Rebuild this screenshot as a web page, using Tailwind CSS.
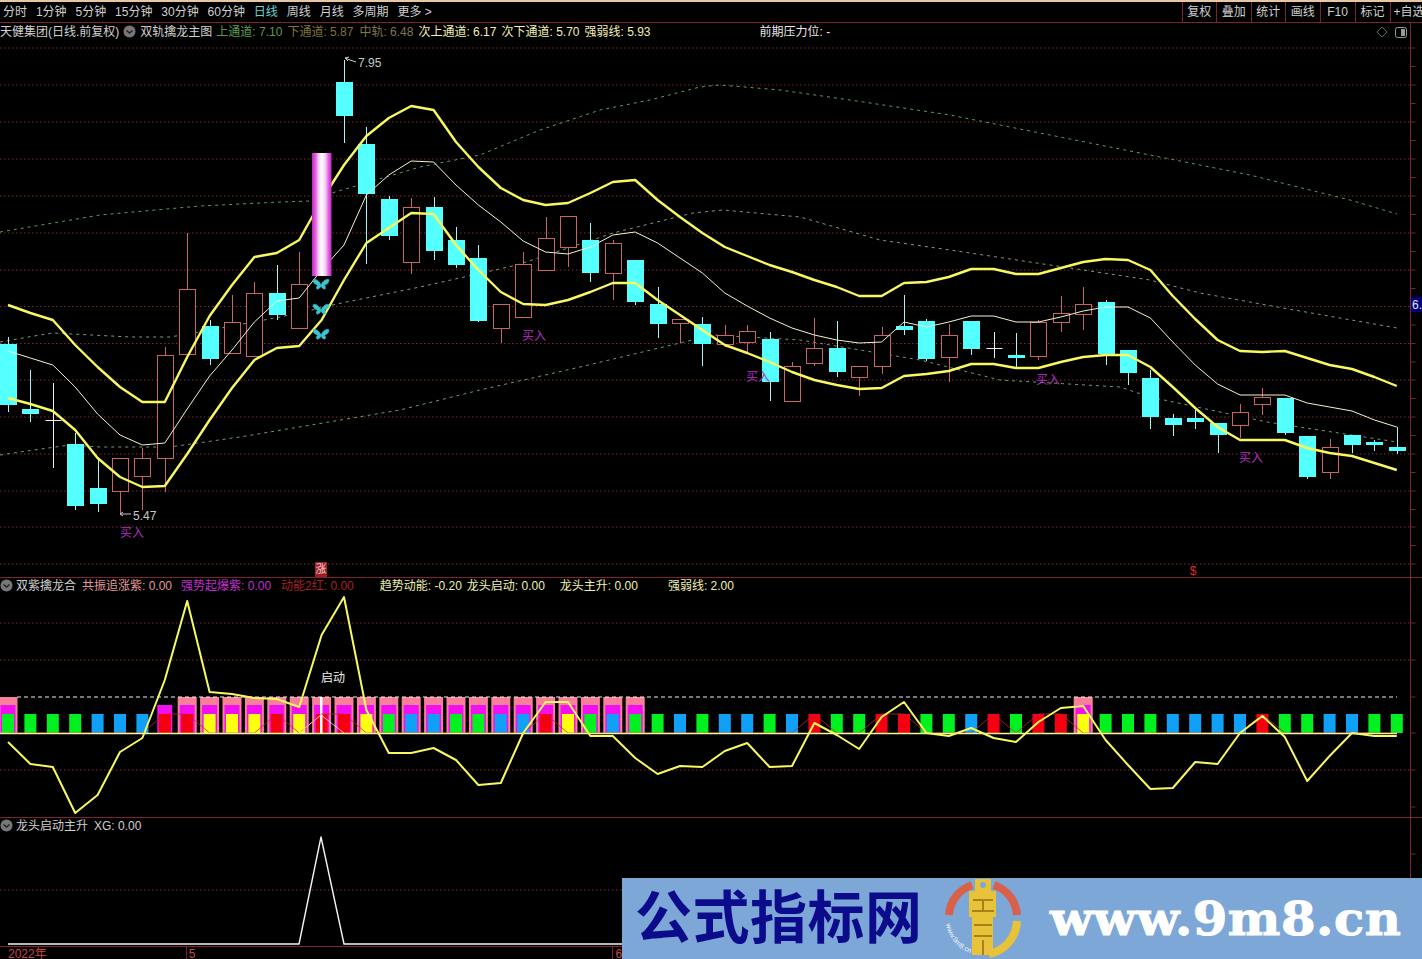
<!DOCTYPE html>
<html lang="en">
<head>
    <meta charset="utf-8">
    <meta name="viewport" content="width=device-width, initial-scale=1.0">
    <title>天健集团 日线</title>
    <script src="https://cdn.jsdelivr.net/npm/@tailwindcss/browser@4"></script>
</head>
<body class="relative bg-black h-screen overflow-hidden text-[12px] leading-none text-[#d0d0d0] font-['Liberation_Sans','Noto_Sans_CJK_SC',sans-serif]">

    <!-- period tabs + tools -->
    <header class="h-[23px] flex border-t-2 border-t-[#e8c8a0] border-b border-b-[#7c2230] overflow-hidden">
        <nav class="flex items-center gap-[8.9px] pl-[3px]">
            <span>分时</span><span>1分钟</span><span>5分钟</span><span>15分钟</span><span>30分钟</span><span>60分钟</span>
            <span class="text-[#6fd0d0]">日线</span><span>周线</span><span>月线</span><span>多周期</span><span>更多 &gt;</span>
        </nav>
        <div class="ml-auto flex shrink-0 w-[240.5px]">
            <span class="w-[34.5px] shrink-0 flex items-center justify-center border-l border-[#7c2230]">复权</span>
            <span class="w-[34.5px] shrink-0 flex items-center justify-center border-l border-[#7c2230]">叠加</span>
            <span class="w-[34.5px] shrink-0 flex items-center justify-center border-l border-[#7c2230]">统计</span>
            <span class="w-[34.5px] shrink-0 flex items-center justify-center border-l border-[#7c2230]">画线</span>
            <span class="w-[35px] shrink-0 flex items-center justify-center border-l border-[#7c2230]">F10</span>
            <span class="w-[35px] shrink-0 flex items-center justify-center border-l border-[#7c2230]">标记</span>
            <span class="w-[40px] shrink-0 pl-[3px] flex items-center border-l border-[#7c2230] whitespace-nowrap">+自选</span>
        </div>
    </header>

    <!-- main chart -->
    <section class="relative h-[555px] border-b border-[#7c2230]">
        <svg id="mainChart" class="block" width="1422" height="554" viewBox="0 23 1422 554"></svg>
        <div class="absolute top-[1px] left-0 h-[15px] flex items-center whitespace-nowrap">
            <span>天健集团(日线.前复权)</span>
            <svg class="ml-[4px]" width="13" height="13" viewBox="0 0 13 13"><circle cx="6.5" cy="6.5" r="6" fill="#777"/><path d="M3.5 5.5l3 2.6 3-2.6" fill="none" stroke="#222" stroke-width="1.5"/></svg>
            <span class="ml-[4px]">双轨擒龙主图</span>
            <span class="ml-[4px] text-[#5c9c50]">上通道: 7.10</span>
            <span class="ml-[5px] text-[#7c7638]">下通道: 5.87</span>
            <span class="ml-[6px] text-[#7c7a50]">中轨: 6.48</span>
            <span class="ml-[5px] text-[#f0f0b4]">次上通道: 6.17</span>
            <span class="ml-[5px] text-[#f0f0b4]">次下通道: 5.70</span>
            <span class="ml-[5px] text-[#f0f0b4]">强弱线: 5.93</span>
            <span class="ml-[109px] text-[#e8e8e8]">前期压力位: -</span>
        </div>
    </section>

    <!-- indicator 1 -->
    <section class="relative h-[240px] border-b border-[#7c2230]">
        <svg id="indChart" class="block" width="1422" height="239" viewBox="0 578 1422 239"></svg>
        <div class="absolute top-0 left-0 h-[15px] flex items-center whitespace-nowrap">
            <svg width="13" height="13" viewBox="0 0 13 13"><circle cx="6.5" cy="6.5" r="6" fill="#777"/><path d="M3.5 5.5l3 2.6 3-2.6" fill="none" stroke="#222" stroke-width="1.5"/></svg>
            <span class="ml-[3px]">双紫擒龙合</span>
            <span class="ml-[6px] text-[#e09a9a]">共振追涨紫: 0.00</span>
            <span class="ml-[9px] text-[#c030d0]">强势起爆紫: 0.00</span>
            <span class="ml-[10px] text-[#a82222]">动能2红: 0.00</span>
            <span class="ml-[26px] text-[#f0f0b4]">趋势动能: -0.20</span>
            <span class="ml-[5px] text-[#f0f0b4]">龙头启动: 0.00</span>
            <span class="ml-[15px] text-[#f0f0b4]">龙头主升: 0.00</span>
            <span class="ml-[30px] text-[#f0f0b4]">强弱线: 2.00</span>
        </div>
    </section>

    <!-- indicator 2 -->
    <section class="relative h-[129px] border-b border-[#7c2230]">
        <svg id="xgChart" class="block" width="1422" height="128" viewBox="0 818 1422 128"></svg>
        <div class="absolute top-0 left-0 h-[15px] flex items-center whitespace-nowrap">
            <svg width="13" height="13" viewBox="0 0 13 13"><circle cx="6.5" cy="6.5" r="6" fill="#777"/><path d="M3.5 5.5l3 2.6 3-2.6" fill="none" stroke="#222" stroke-width="1.5"/></svg>
            <span class="ml-[3px]">龙头启动主升</span>
            <span class="ml-[6px]">XG: 0.00</span>
        </div>
    </section>

    <!-- date axis -->
    <footer class="h-[12px] flex items-start text-[#c84848] overflow-hidden">
        <span class="ml-[8px] pt-[1px]">2022年</span>
        <span class="ml-[139px] pl-[2px] pt-[1px] border-l border-[#7c2230]">5</span>
        <span class="ml-[417px] pl-[2px] pt-[1px] border-l border-[#7c2230]">6</span>
    </footer>

    <!-- site banner over the chart corner -->
    <div class="absolute left-[622px] top-[878px] w-[800px] h-[81px] bg-[#7da7d6] flex items-center">
        <span class="ml-[13px] w-[285px] text-[57px] leading-none font-bold tracking-[0.5px] text-[#0b0b8c] whitespace-nowrap">公式指标网</span>
        <svg class="ml-[23px] shrink-0" width="80" height="81" viewBox="0 0 80 81">
            <path d="M6 37A34 34 0 0 1 29 7" fill="none" stroke="#d8614c" stroke-width="8"/>
            <path d="M51 7A34 34 0 0 1 74 37" fill="none" stroke="#d8614c" stroke-width="8"/>
            <path d="M74 43A35 35 0 0 1 46 76" fill="none" stroke="#e8c238" stroke-width="8"/>
            <path d="M32 1h16v12h5v26h-3v38h-21v-38h-3v-26h6z" fill="#e8c238"/>
            <circle cx="40" cy="7" r="3" fill="#7da7d6"/>
            <path d="M30 22h20M29 33h22M31 47h18M31 58h18M40 22v11M40 62v15" stroke="#a8801c" stroke-width="2" fill="none"/>
            <path id="logoArc" d="M3 46A37 37 0 0 0 27 75" fill="none"/>
            <text class="text-[7px]" fill="#f4f4f4"><textPath href="#logoArc">www.9m8.cn</textPath></text>
        </svg>
        <span class="ml-[27px] origin-left scale-x-[1.08] text-[46px] leading-none font-bold tracking-[0.5px] text-white whitespace-nowrap [-webkit-text-stroke:1px_white] font-['DejaVu_Serif',serif]">www.9m8.cn</span>
    </div>

    <script>
        const NS = 'http://www.w3.org/2000/svg';
        const X = i => 8 + 22.4 * i;
        const AXIS = 1410.5;
        const GRID = '#7e2a2a';

        // [bodyTop, bodyBottom, wickTop, wickBottom, type]  d = down (cyan), u = up (hollow), x = doji, b = limit-up bar
        const candles = [
            [344,405,337,412,'d'],[409,414,370,422,'d'],[420,420,383,468,'x'],[444,506,433,510,'d'],[488,504,459,512,'d'],
            [458,491,458,513,'u'],[458,476,448,510,'u'],[355,458,347,492,'u'],[289,354,233,354,'u'],[326,359,320,365,'d'],
            [322,353,295,353,'u'],[293,356,282,356,'u'],[293,315,265,320,'d'],[284,328,252,328,'u'],[153,276,153,276,'b'],
            [82,116,60,143,'d'],[144,194,127,264,'d'],[199,236,196,240,'d'],[207,262,198,274,'u'],[207,251,197,260,'d'],
            [240,265,227,268,'d'],[258,321,245,322,'d'],[304,328,304,343,'u'],[264,317,252,317,'u'],[238,270,217,270,'u'],
            [216,247,216,267,'u'],[240,273,223,282,'d'],[243,273,240,300,'u'],[260,302,260,305,'d'],[304,324,287,338,'d'],
            [319,323,319,343,'u'],[324,344,317,366,'d'],[335,344,325,347,'u'],[331,342,325,353,'u'],[339,382,332,401,'d'],
            [366,401,362,401,'u'],[348,363,318,366,'u'],[348,372,321,377,'d'],[366,377,366,396,'u'],[335,366,327,374,'u'],
            [326,330,295,335,'d'],[321,359,319,361,'d'],[335,357,324,382,'u'],[321,349,321,355,'d'],[348,348,332,358,'x'],
            [355,357,333,368,'d'],[322,356,320,360,'u'],[313,322,296,332,'u'],[304,314,287,330,'u'],[302,354,300,365,'d'],
            [350,373,350,385,'d'],[378,417,370,429,'d'],[418,425,414,436,'d'],[418,422,410,429,'d'],[423,435,423,453,'d'],
            [412,425,404,438,'u'],[397,404,388,415,'u'],[398,433,398,435,'d'],[436,477,436,479,'d'],[447,472,439,479,'u'],
            [435,445,435,453,'d'],[442,445,440,451,'d'],[447,451,427,454,'d']
        ];

        const upper = [305,313,320,345,367,387,402,402,357,316,285,257,253,240,200,165,136,118,106,110,142,167,188,200,205,203,193,182,180,200,217,233,247,256,265,272,280,287,296,296,283,282,277,269,269,274,274,268,262,259,260,270,296,319,340,351,352,351,358,365,369,377,386];
        const middle = [351,358,365,387,414,435,445,443,409,376,350,322,301,298,270,245,195,175,161,162,185,205,222,241,252,254,247,235,232,243,258,273,293,306,318,328,335,340,343,342,322,327,322,316,316,322,322,317,311,307,307,318,342,365,384,395,395,395,403,407,411,420,427];
        const lower = [398,404,411,430,458,477,487,486,454,420,388,360,348,346,320,280,243,228,213,214,245,270,292,304,305,300,292,283,283,300,315,330,345,353,362,372,380,385,389,388,376,374,371,364,364,368,368,362,357,355,355,367,387,408,427,440,440,440,448,453,456,463,470];

        const outerTop = [[0,232],[100,215],[200,206],[280,202],[310,201],[332,193],[420,167],[480,155],[540,130],[600,110],[650,100],[700,87],[720,85],[780,90],[850,100],[950,115],[1050,135],[1150,155],[1250,175],[1350,200],[1397,214]];
        const outerMid = [[0,342],[40,335],[53,333],[130,337],[170,337],[200,332],[280,317],[312,310],[332,305],[420,287],[517,265],[613,233],[693,213],[723,210],[800,217],[880,240],[950,250],[1050,265],[1150,280],[1200,293],[1283,308],[1397,328]];
        const outerLow = [[0,455],[20,452],[70,445],[100,447],[170,447],[240,437],[400,410],[480,390],[580,367],[680,343],[713,335],[800,340],[920,360],[1000,380],[1120,387],[1150,397],[1267,422],[1397,442]];

        const buy = [[132,533],[534,336],[758,377],[1048,380],[1251,458]];

        // g = green, b = blue, r = red, y = yellow
        const bars = ['g','g','g','g','b','b','b','r','r','y','y','y','r','y','r','r','y','g','b','b','g','g','b','b','r','y','g','b','g','g','b','g','b','b','g','b','r','g','g','r','r','g','g','b','r','g','r','r','y','g','g','g','b','b','b','b','r','g','g','b','b','g','g'];
        const BAR = { g: '#00f020', b: '#10a0f8', r: '#f40010', y: '#ffff10' };
        const pink = i => i === 0 || (i >= 8 && i <= 28) || i === 48;
        const trend = [742,764,767,813,795,752,738,680,601,692,694,698,699,707,635,597,710,753,753,748,760,785,783,733,702,702,736,736,758,774,766,767,751,743,767,766,723,735,749,717,702,733,736,728,738,742,722,708,706,740,765,789,788,762,764,733,716,737,781,756,733,736,736];

        const el = (tag, attrs, text) => {
            const n = document.createElementNS(NS, tag);
            for (const k in attrs) n.setAttribute(k, attrs[k]);
            if (text) n.textContent = text;
            return n;
        };
        const series = arr => arr.map((y, i) => X(i) + ',' + y).join(' ');
        const pairs = arr => arr.map(p => p.join(',')).join(' ');
        const line = (svg, points, color, width, dash) => svg.appendChild(el('polyline', {
            points, fill: 'none', stroke: color, 'stroke-width': width, 'stroke-dasharray': dash || 'none', 'stroke-linejoin': 'round'
        }));
        const grid = (svg, y) => svg.appendChild(el('line', { x1: 0, x2: AXIS, y1: y, y2: y, stroke: GRID, 'stroke-dasharray': '1.5 2.5' }));
        const axis = (svg, y1, y2, ticks) => {
            svg.appendChild(el('line', { x1: AXIS, x2: AXIS, y1, y2, stroke: '#7c2230' }));
            ticks.forEach(y => svg.appendChild(el('line', { x1: AXIS, x2: AXIS + 5, y1: y, y2: y, stroke: '#7c2230' })));
        };

        // main chart
        const main = document.getElementById('mainChart');
        const levels = [48,85,122,159,196,233,270,306.5,343.5,380,417,454,491,527,564];
        levels.forEach(y => grid(main, y));
        const ticks = [];
        levels.forEach(y => { ticks.push(y); ticks.push(y + 18.5); });
        axis(main, 23, 577, ticks.filter(y => y < 577));

        line(main, pairs(outerTop), '#5f9a62', 1, '3 4');
        line(main, pairs(outerMid), '#7f9a7f', 1, '3 4');
        line(main, pairs(outerLow), '#6f9a6f', 1, '3 4');

        candles.forEach((c, i) => {
            const [top, bottom, wickTop, wickBottom, type] = c;
            const x = Math.round(X(i)) + 0.5;
            if (type === 'b') return;
            const wick = type === 'd' ? '#a8f4f4' : type === 'x' ? '#f0f0f0' : '#c86464';
            main.appendChild(el('line', { x1: x, x2: x, y1: wickTop, y2: wickBottom, stroke: wick }));
            if (type === 'x') {
                main.appendChild(el('line', { x1: x - 8, x2: x + 8, y1: top + 0.5, y2: top + 0.5, stroke: wick }));
            } else if (type === 'u') {
                main.appendChild(el('rect', { x: x - 8, y: top + 0.5, width: 16, height: bottom - top, fill: '#000', stroke: '#c86464' }));
            } else {
                main.appendChild(el('rect', { x: x - 8.5, y: top, width: 17, height: Math.max(bottom - top, 3), fill: '#54ffff' }));
            }
        });

        line(main, series(upper), '#f8f860', 2.4);
        line(main, series(middle), '#f4f4cc', 1);
        line(main, series(lower), '#f8f860', 2.4);

        // big limit-up bar
        const defs = el('defs', {});
        const grad = el('linearGradient', { id: 'barGrad' });
        [['0','#c028c0'],['0.18','#e060e0'],['0.35','#f4d0f4'],['0.5','#ffffff'],['0.68','#f4d0f4'],['0.85','#e060e0'],['1','#c028c0']].forEach(s => {
            grad.appendChild(el('stop', { offset: s[0], 'stop-color': s[1] }));
        });
        defs.appendChild(grad);
        main.appendChild(defs);
        main.appendChild(el('rect', { x: 312, y: 153, width: 19.5, height: 123, fill: 'url(#barGrad)' }));

        [284, 309, 334].forEach(y => main.appendChild(el('path', {
            transform: 'translate(321 ' + y + ')',
            fill: '#38c4d0',
            stroke: '#38c4d0',
            'stroke-width': 0.6,
            d: 'M0 1C-2-4-7-6-8-4-8-1-5 1-3 1-5 2-5 6-3 5-1 4 0 3 0 1C0 3 1 4 3 5 5 6 5 2 3 1 5 1 8-1 8-4 7-6 2-4 0 1Z'
        })));

        // high / low marks
        main.appendChild(el('path', { d: 'M356 62L350 60 345 58M345 58L349 57M345 58L348 61', fill: 'none', stroke: '#c8c8c8' }));
        main.appendChild(el('text', { x: 358, y: 67, fill: '#c8c8c8' }, '7.95'));
        main.appendChild(el('path', { d: 'M131 514H120M120 514L123 512M120 514L123 516', fill: 'none', stroke: '#c8c8c8' }));
        main.appendChild(el('text', { x: 133, y: 520, fill: '#c8c8c8' }, '5.47'));

        buy.forEach(b => main.appendChild(el('text', { x: b[0], y: b[1] + 4, fill: '#b030c0', 'text-anchor': 'middle' }, '买入')));

        main.appendChild(el('rect', { x: 315, y: 562, width: 12, height: 15, fill: '#a01c24' }));
        main.appendChild(el('text', { x: 321, y: 573, fill: '#f0d8d8', 'text-anchor': 'middle', 'font-size': 11 }, '涨'));
        main.appendChild(el('text', { x: 1193, y: 575, fill: '#d83030', 'text-anchor': 'middle' }, '$'));

        main.appendChild(el('path', { d: 'M1382 27l5 5-5 5-5-5z', fill: 'none', stroke: '#666' }));
        main.appendChild(el('rect', { x: 1395.5, y: 27.5, width: 11, height: 10, rx: 2, fill: 'none', stroke: '#999' }));
        main.appendChild(el('rect', { x: 1401, y: 29, width: 4, height: 7, fill: '#999' }));

        main.appendChild(el('rect', { x: 1411, y: 297, width: 11, height: 15, fill: '#000080' }));
        main.appendChild(el('text', { x: 1412, y: 309, fill: '#e8e8e8' }, '6.'));

        // indicator 1
        const ind = document.getElementById('indChart');
        [623, 660, 770].forEach(y => grid(ind, y));
        axis(ind, 578, 817, [623, 660, 697, 733, 770, 807]);

        bars.forEach((b, i) => {
            const x = X(i);
            if (pink(i)) ind.appendChild(el('rect', { x: x - 9.5, y: 697, width: 19, height: 36, fill: '#f88098' }));
            if (pink(i) || i === 7) ind.appendChild(el('rect', { x: x - 7.5, y: 705, width: 15, height: 28, fill: '#f010f0' }));
            ind.appendChild(el('rect', { x: x - 6, y: 714, width: 12, height: 19, fill: BAR[b] }));
        });
        ind.appendChild(el('rect', { x: 320, y: 697, width: 2.5, height: 36, fill: '#fff' }));

        line(ind, bars.map((b, i) => X(i) + ',' + (b === 'r' ? 714 : 733)).join(' '), '#c02828', 0.8);
        line(ind, '299,733 321,715 344,733', '#f4f4f4', 0.8);
        line(ind, '17,697 1397,697', '#f0f0f0', 1, '4 3');
        line(ind, '0,733.5 1397,733.5', '#f8f8a0', 1.4);
        line(ind, series(trend), '#f8f860', 2);
        ind.appendChild(el('text', { x: 333, y: 682, fill: '#f0f0f0', 'text-anchor': 'middle' }, '启动'));

        // indicator 2
        const xg = document.getElementById('xgChart');
        grid(xg, 890);
        axis(xg, 818, 946, [854, 890, 926]);
        line(xg, '8,944 299,944 321,837 344,944 1397,944', '#f4f4f4', 1.4);
    </script>

</body>
</html>
